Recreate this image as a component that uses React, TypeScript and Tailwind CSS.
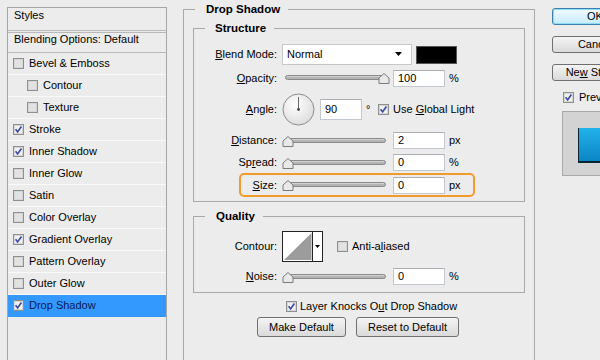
import React from 'react';

// Layer Style dialog, "Drop Shadow" page
const effects = [
  { name: 'Bevel & Emboss', on: false },
  { name: 'Contour', on: false, sub: true },
  { name: 'Texture', on: false, sub: true },
  { name: 'Stroke', on: true },
  { name: 'Inner Shadow', on: true },
  { name: 'Inner Glow', on: false },
  { name: 'Satin', on: false },
  { name: 'Color Overlay', on: false },
  { name: 'Gradient Overlay', on: true },
  { name: 'Pattern Overlay', on: false },
  { name: 'Outer Glow', on: false },
  { name: 'Drop Shadow', on: true, active: true },
];

function CheckBox({ on }: { on?: boolean }) {
  return (
    <svg width="11" height="11" viewBox="0 0 11 11" className="shrink-0">
      <rect x="0.5" y="0.5" width="10" height="10" fill="#f4f4f4" stroke="#8e8f8f" />
      <rect x="1.5" y="1.5" width="8" height="8" fill={on ? '#f2f2f2' : '#e2e2e2'} stroke="#d6d6d6" />
      {on && <path d="M2.6 5.3 L4.6 7.9 L8.4 2.4" fill="none" stroke="#3b4ca8" strokeWidth="1.7" />}
    </svg>
  );
}

function Slider({ pos }: { pos: number }) {
  const cx = 6 + pos * 96;
  return (
    <svg width="108" height="12" viewBox="0 0 108 12" className="shrink-0">
      <rect x="3.5" y="3.5" width="100" height="4" rx="2" fill="#b4b4b4" stroke="#8a8a8a" />
      <line x1="5" y1="4.5" x2="102" y2="4.5" stroke="#d2d2d2" />
      <path
        d={`M${cx} 1.5 L${cx + 5} 6 L${cx + 5} 11.5 L${cx - 5} 11.5 L${cx - 5} 6 Z`}
        fill="#e9e9e9"
        stroke="#7b7b7b"
      />
    </svg>
  );
}

function Field({ value }: { value: string }) {
  return (
    <div className="ml-[3px] w-[52px] h-[17px] shrink-0 bg-white border border-[#c3c8ce] border-t-[#abadb3] pl-[4px] leading-[15px]">
      {value}
    </div>
  );
}

function Btn({ children, className = '' }: { children: React.ReactNode; className?: string }) {
  return (
    <div
      className={`flex items-center justify-center shrink-0 rounded-[3px] border border-[#707070] bg-linear-to-b from-[#f4f4f4] to-[#dadada] ${className}`}
    >
      {children}
    </div>
  );
}

export default function App() {
  return (
    <div className="w-[600px] h-[360px] overflow-hidden bg-[#ececec] flex items-start pl-[7px] text-[11px] text-black font-['Liberation_Sans',Arial,sans-serif]">
      {/* Styles list */}
      <div className="mt-[7px] w-[160px] h-[360px] shrink-0 border border-[#a5a5a5]">
        <div className="h-[23px] border-b border-[#b9b9b9] pl-[6px] pt-[1px] leading-[13px]">Styles</div>
        <div className="mt-[1px] h-[21px] border-y border-[#b9b9b9] pl-[6px] leading-[13px]">
          Blending Options: Default
        </div>
        {effects.map((e) => (
          <div
            key={e.name}
            className={`h-[22px] flex items-center border-b ${
              e.active ? 'bg-[#3399ff] border-[#3399ff] text-[#061a52]' : 'border-[#f9f9f9]'
            } ${e.sub ? 'pl-[19px]' : 'pl-[5px]'}`}
          >
            <CheckBox on={e.on} />
            <span className="ml-[5px]">{e.name}</span>
          </div>
        ))}
      </div>

      {/* Drop Shadow page */}
      <fieldset className="ml-[16px] mt-[2px] w-[352px] h-[400px] shrink-0 border border-[#a9a9a9]">
        <legend className="ml-[11px] pl-[11px] pr-[8px] font-bold text-[11.5px] leading-[14px]">Drop Shadow</legend>

        <fieldset className="mx-[9px] mt-[5px] pb-[4px] border border-[#a9a9a9]">
          <legend className="ml-[11px] pl-[10px] pr-[8px] font-bold text-[11.5px] leading-[14px]">Structure</legend>

          <div className="mt-[9px] h-[21px] flex items-center">
            <div className="w-[83px] text-right">
              <u>B</u>lend Mode:
            </div>
            <div className="ml-[5px] w-[130px] h-[21px] bg-white border border-[#c8c8c8] flex items-center pl-[4px]">
              <span>Normal</span>
              <svg width="8" height="5" viewBox="0 0 8 5" className="ml-auto mr-[8px]">
                <path d="M0 0 H7 L3.5 4 Z" fill="#000" />
              </svg>
            </div>
            <div className="ml-[4px] w-[41px] h-[18px] bg-black border border-[#555]" />
          </div>

          <div className="mt-[4px] h-[18px] flex items-center">
            <div className="w-[83px] text-right">
              <u>O</u>pacity:
            </div>
            <div className="ml-[5px]">
              <Slider pos={1} />
            </div>
            <Field value="100" />
            <span className="ml-[4px]">%</span>
          </div>

          <div className="mt-[6px] h-[32px] flex items-center">
            <div className="w-[83px] text-right">
              <u>A</u>ngle:
            </div>
            <svg width="33" height="33" viewBox="0 0 33 33" className="ml-[5px] shrink-0">
              <defs>
                <radialGradient id="dial" cx="0.4" cy="0.35" r="0.75">
                  <stop offset="0" stopColor="#ffffff" />
                  <stop offset="1" stopColor="#d9d9d9" />
                </radialGradient>
              </defs>
              <circle cx="16.5" cy="16.5" r="15.5" fill="url(#dial)" stroke="#8c8c8c" />
              <line x1="16.5" y1="16.5" x2="16.5" y2="4" stroke="#6a6a6a" />
              <circle cx="16.5" cy="16.5" r="1.4" fill="#444" />
            </svg>
            <div className="ml-[5px] w-[42px] h-[21px] shrink-0 bg-white border border-[#c3c8ce] border-t-[#abadb3] pl-[4px] flex items-center">
              90
            </div>
            <span className="ml-[4px] w-[4px]">°</span>
            <div className="ml-[8px]">
              <CheckBox on />
            </div>
            <span className="ml-[4px]">
              Use <u>G</u>lobal Light
            </span>
          </div>

          <div className="mt-[7px] h-[17px] flex items-center">
            <div className="w-[83px] text-right">
              <u>D</u>istance:
            </div>
            <div className="ml-[5px]">
              <Slider pos={0} />
            </div>
            <Field value="2" />
            <span className="ml-[4px]">px</span>
          </div>

          <div className="mt-[5px] h-[17px] flex items-center">
            <div className="w-[83px] text-right">
              Sp<u>r</u>ead:
            </div>
            <div className="ml-[5px]">
              <Slider pos={0} />
            </div>
            <Field value="0" />
            <span className="ml-[4px]">%</span>
          </div>

          <div className="mt-[2px] ml-[45px] w-[236px] rounded-[5px] border-2 border-[#f39a2c]">
            <div className="h-[20px] flex items-center">
              <div className="w-[36px] text-right">
                <u>S</u>ize:
              </div>
              <div className="ml-[5px]">
                <Slider pos={0} />
              </div>
              <Field value="0" />
              <span className="ml-[4px]">px</span>
            </div>
          </div>
        </fieldset>

        <fieldset className="mx-[9px] mt-[7px] pb-[7px] border border-[#a9a9a9]">
          <legend className="ml-[11px] pl-[11px] pr-[8px] font-bold text-[11.5px] leading-[14px]">Quality</legend>

          <div className="mt-[8px] h-[31px] flex items-center">
            <div className="w-[83px] text-right">Contour:</div>
            <svg width="41" height="31" viewBox="0 0 41 31" className="ml-[5px] shrink-0">
              <rect x="0.5" y="0.5" width="40" height="30" fill="#fff" stroke="#222" />
              <polygon points="2,29 29.5,2 29.5,29" fill="#9c9c9c" />
              <line x1="30.5" y1="1" x2="30.5" y2="30" stroke="#222" />
              <polygon points="33,14 38,14 35.5,17" fill="#000" />
            </svg>
            <div className="ml-[14px]">
              <CheckBox />
            </div>
            <span className="ml-[4px]">
              Anti-a<u>l</u>iased
            </span>
          </div>

          <div className="mt-[6px] h-[17px] flex items-center">
            <div className="w-[83px] text-right">
              <u>N</u>oise:
            </div>
            <div className="ml-[5px]">
              <Slider pos={0} />
            </div>
            <Field value="0" />
            <span className="ml-[4px]">%</span>
          </div>
        </fieldset>

        <div className="mt-[7px] ml-[102px] h-[13px] flex items-center">
          <CheckBox on />
          <span className="ml-[3px]">
            Layer Knocks O<u>u</u>t Drop Shadow
          </span>
        </div>

        <div className="mt-[4px] ml-[73px] flex">
          <Btn className="w-[89px] h-[20px]">Make Default</Btn>
          <Btn className="ml-[10px] w-[103px] h-[20px]">Reset to Default</Btn>
        </div>
      </fieldset>

      {/* Buttons and preview */}
      <div className="ml-[17px] mt-[8px] w-[86px] shrink-0">
        <div className="h-[17px] flex items-center justify-center rounded-[3px] border border-[#3c7fb1] bg-linear-to-b from-[#f2fafe] to-[#c6ebfc] shadow-[inset_0_0_0_1px_#8fdcf8]">
          OK
        </div>
        <Btn className="mt-[11px] w-[86px] h-[17px]">Cancel</Btn>
        <Btn className="mt-[11px] w-[86px] h-[17px]">
          <span>
            Ne<u>w</u> Style...
          </span>
        </Btn>
        <div className="mt-[10px] ml-[11px] h-[12px] flex items-center">
          <CheckBox on />
          <span className="ml-[5px]">Preview</span>
        </div>
        <div className="mt-[8px] ml-[10px] w-[80px] h-[65px] border border-[#a8a8a8] bg-[#d3d3d3] pl-[15px] pt-[16px]">
          <div className="h-[35px] w-[60px] bg-linear-to-b from-[#22b2ea] to-[#0a86c4] border-l border-b-2 border-[#0b2533]" />
        </div>
      </div>
    </div>
  );
}
